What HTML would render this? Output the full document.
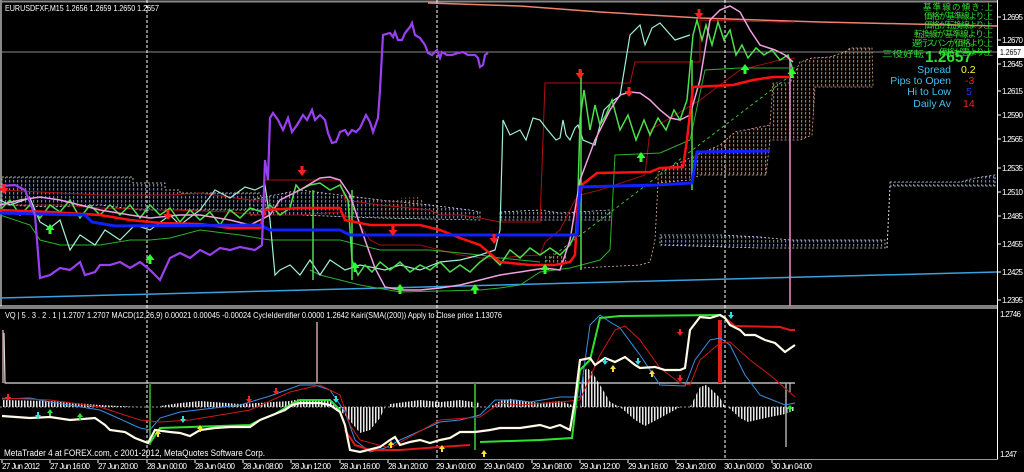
<!DOCTYPE html>
<html><head><meta charset="utf-8"><style>
html,body{margin:0;padding:0;background:#000;width:1024px;height:472px;overflow:hidden}
svg{display:block}
text{font-family:"Liberation Sans","Noto Sans CJK JP",sans-serif}
</style></head><body>
<svg width="1024" height="472" viewBox="0 0 1024 472" xmlns="http://www.w3.org/2000/svg">
<defs>
<pattern id="pv" width="4" height="4" patternUnits="userSpaceOnUse"><rect x="1" y="0" width="1.2" height="2.5" fill="#7474f0"/></pattern>
<pattern id="po" width="4" height="4" patternUnits="userSpaceOnUse"><rect x="1" y="0" width="1.2" height="2.5" fill="#d86040"/></pattern>
<pattern id="ph" width="3" height="3" patternUnits="userSpaceOnUse"><rect x="0" y="0" width="1.5" height="3" fill="#e8e8e8"/></pattern>
<path id="ad" d="M-1.5,-6 h3 v4 h3 l-4.5,6 l-4.5,-6 h3z"/>
<path id="au" d="M-1.5,6 h3 v-4 h3 l-4.5,-6 l-4.5,6 h3z"/>
<path id="sd" d="M-1,-4 h2 v3 h2 l-3,4 l-3,-4 h2z"/>
<path id="su" d="M-1,4 h2 v-3 h2 l-3,-4 l-3,4 h2z"/>
</defs>
<rect width="1024" height="472" fill="#000"/>
<line x1="0" y1="1.5" x2="998" y2="1.5" stroke="#888" stroke-width="2"/>
<line x1="1" y1="0" x2="1" y2="306" stroke="#888" stroke-width="2"/>
<line x1="997.5" y1="0" x2="997.5" y2="460" stroke="#fff"/>
<line x1="0" y1="306" x2="998" y2="306" stroke="#fff"/>
<line x1="0" y1="308" x2="998" y2="308" stroke="#fff"/>
<line x1="0" y1="459.5" x2="998" y2="459.5" stroke="#999"/>
<line x1="0" y1="52" x2="997" y2="52" stroke="#8a8a8a"/>
<g stroke="#fff" stroke-dasharray="3,2">
<line x1="147" y1="0" x2="147" y2="460"/><line x1="437" y1="0" x2="437" y2="460"/><line x1="725" y1="0" x2="725" y2="460"/>
</g>
<polygon points="2,177 133,177 133,183 165,183 165,190 180,190 180,193 260,193 262,200 270,200 270,210 140,210 100,205 50,207 2,205" fill="url(#pv)" stroke="#ddd" stroke-dasharray="2,2" stroke-width="0.8"/>
<polygon points="250,200 300,190 340,195 380,200 430,205 470,210 480,212 480,220 380,218 300,215 250,215" fill="url(#pv)" stroke="#ddd" stroke-dasharray="2,2" stroke-width="0.8"/>
<polygon points="380,200 400,198 420,197 425,205 425,218 380,218" fill="url(#po)"/>
<polygon points="500,212 540,210 560,213 610,210 610,220 500,220" fill="url(#pv)" stroke="#ddd" stroke-dasharray="2,2" stroke-width="0.8"/>
<polygon points="545,255 560,252 565,255 570,262 545,265" fill="url(#po)"/>
<polygon points="658,172 690,158 720,145 735,132 770,125 773,83 790,83 800,62 812,58 830,57 845,52 850,48 872,48 873,87 815,87 812,135 800,140 770,140 766,175 700,175 690,180 658,183" fill="url(#po)" stroke="#e0b090" stroke-dasharray="2,2" stroke-width="0.8"/>
<polygon points="660,235 720,235 760,237 790,240 830,240 885,240 885,248 790,248 760,248 660,245" fill="url(#pv)" stroke="#ddd" stroke-dasharray="2,2" stroke-width="0.8"/>
<polygon points="890,182 960,182 975,178 995,175 995,186 890,186" fill="url(#pv)" stroke="#ddd" stroke-dasharray="2,2" stroke-width="0.8"/>
<polyline points="658,183 655,240 650,262 640,265 580,268" fill="none" stroke="#e0b090" stroke-dasharray="2,2" stroke-width="0.8"/>
<polyline points="890,186 887,248" fill="none" stroke="#ddd" stroke-dasharray="2,2"/>
<line x1="0" y1="298" x2="997" y2="272" stroke="#3aa0e0" stroke-width="1.5"/>
<polyline points="428,3 520,6 600,12 700,18 820,22 997,26" fill="none" stroke="#f08070" stroke-width="1.5"/>
<line x1="790" y1="60" x2="790" y2="306" stroke="#f090d0" stroke-width="1.5"/>
<polyline points="0,190 60,193 100,195 170,195 200,193 250,200 265,200 265,180 340,180 345,200 380,205 430,210 440,215 460,215 480,218 500,222 540,222 545,83 630,83 635,62 700,62 700,20 780,22 795,22" fill="none" stroke="#b01010" stroke-width="1"/>
<polyline points="0,205 60,205 100,208 170,210 230,212 260,215 300,215 340,212 360,225 370,240 380,245 420,245 440,250 460,255 480,258 500,258 520,256 540,255 545,242 560,230 575,200 580,195 600,190 630,180 645,175 650,130 700,100 740,70 780,60 795,58" fill="none" stroke="#a01010" stroke-width="1"/>
<polyline points="0,215 30,225 40,240 60,245 100,245 130,240 150,240 170,238 200,230 240,235 270,240 340,240 380,250 430,250 480,255 500,258 540,262" fill="none" stroke="#2cb02c" stroke-width="1"/>
<polyline points="310,270 320,275 360,285 400,292 480,290 500,288 520,285 540,272 570,268 600,260 610,250 615,155 660,153 690,140 705,70 740,68 780,68 795,68" fill="none" stroke="#2cb02c" stroke-width="1"/>
<line x1="545" y1="262" x2="795" y2="72" stroke="#3cc03c" stroke-width="1" stroke-dasharray="3,3"/>
<polyline points="0,200 10,205 30,198 40,222 50,228 60,220 70,250 80,235 95,245 105,230 120,240 135,225 150,230 170,215 180,225 200,210 215,190 230,198 245,187 255,190 265,185 270,220 275,275 280,270 290,265 300,275 310,260 320,275 330,260 345,270 360,265 385,270 400,265 420,270 440,262 460,260 480,255 495,250 500,230 503,120 510,135 520,130 526,140 533,118 540,120 546,128 556,140 560,138 563,120 566,135 570,140 575,128 578,125 583,140 595,145 600,125 604,110 614,100 620,96 630,35 640,25 645,45 652,28 660,23 675,40 690,35" fill="none" stroke="#9ff0d8" stroke-width="1.2"/>
<g stroke="#4ce04c" stroke-width="1.5" fill="none">
<polyline points="0,210 10,200 20,215 30,205 40,218 50,205 60,212 70,200 80,218 90,205 100,215 110,205 120,215 130,205 140,218 150,205 160,215 170,208 180,222 190,210 200,220 210,212 220,225 230,210 240,218 250,208 262,212 270,205 280,215 290,208 296,185 300,190 310,185 320,183 330,190 340,185 348,200 352,260 358,275 365,265 372,272 380,262 390,270 400,262 410,272 420,265 430,270 440,262 450,272 460,265 470,272 480,262 490,255 500,265 510,250 520,258 530,248 540,255 550,248 560,255 570,245 577,230 580,120 584,90 590,130 595,105 600,125 606,115 612,100 620,130 628,115 636,140 644,120 650,135 658,118 666,130 674,110 680,120 687,100 693,35 697,20 702,40 706,25 712,45 718,22 724,40 730,30 736,55 742,45 748,58 756,48 764,55 772,50 780,60 788,55 793,70"/>
<line x1="581" y1="70" x2="581" y2="270"/><line x1="692" y1="60" x2="692" y2="190"/><line x1="352" y1="190" x2="352" y2="280"/><line x1="313" y1="190" x2="313" y2="280"/>
</g>
<polyline points="0,205 20,200 40,197 60,200 80,205 100,210 130,215 150,218 180,215 200,215 230,220 250,225 270,215 280,200 300,190 320,178 330,177 340,180 350,195 365,240 375,268 385,287 400,290 420,290 440,288 460,285 480,280 500,275 520,272 545,268 560,270 570,240 580,180 595,140 610,110 620,95 630,92 640,93 650,100 660,110 670,118 680,120 690,115 700,80 710,20 720,10 730,6 740,12 750,30 760,45 775,50 785,55 793,62" fill="none" stroke="#f2a0e0" stroke-width="1.5"/>
<polyline points="0,210 50,212 100,215 130,220 160,223 200,224 230,228 260,228 265,210 300,208 340,208 345,220 370,225 420,225 440,230 460,238 480,245 500,262 530,265 555,265 570,262 575,255 578,200 583,184 597,173 650,172 660,168 683,167 687,140 693,87 733,85 753,80 773,77 790,77" fill="none" stroke="#ff1010" stroke-width="2.5"/>
<polyline points="0,213 85,215 92,222 115,226 260,225 270,230 340,230 350,235 380,235 577,235 580,187 657,185 692,183 697,152 770,151" fill="none" stroke="#1020ff" stroke-width="3"/>
<polyline points="2,186 15,185 25,190 35,215 40,278 50,275 60,268 70,270 80,262 85,275 95,272 100,265 110,265 120,262 130,268 140,262 150,270 160,280 170,258 180,253 190,258 200,250 210,255 220,248 230,250 240,247 255,250 262,245 265,160 268,180 270,118 273,113 278,120 283,130 288,118 292,132 297,125 303,115 307,120 312,110 315,120 320,115 325,120 328,133 332,143 336,142 340,132 345,130 348,135 352,130 356,132 360,128 366,115 370,122 373,132 378,118 380,90 383,35 390,33 393,37 395,32 398,40 402,40 405,33 410,27 412,23 415,35 420,38 425,45 428,53 432,55 437,50 440,58 442,52 447,55 452,55 458,53 463,52 468,55 475,55 478,58 480,67 483,65 485,55 488,53" fill="none" stroke="#9a40f0" stroke-width="2.2"/>
<g fill="#ff2020">
<use href="#ad" x="168" y="216"/><use href="#ad" x="393" y="232"/><use href="#ad" x="494" y="240"/><use href="#ad" x="580" y="75"/><use href="#ad" x="629" y="93"/><use href="#ad" x="699" y="15"/><use href="#ad" x="302" y="172"/><use href="#ad" x="4" y="190"/>
</g>
<g fill="#30ff30">
<use href="#au" x="50" y="228"/><use href="#au" x="150" y="258"/><use href="#au" x="355" y="266"/><use href="#au" x="400" y="288"/><use href="#au" x="475" y="288"/><use href="#au" x="545" y="268"/><use href="#au" x="641" y="156"/><use href="#au" x="745" y="68"/><use href="#au" x="792" y="72"/>
</g>
<!-- SUB -->
<polyline points="4,333 5,383 795,383" fill="none" stroke="#ddd" stroke-width="1.2"/>
<line x1="790" y1="383" x2="790" y2="392" stroke="#ddd"/>
<line x1="317" y1="322" x2="317" y2="383" stroke="#d0a0a0" stroke-width="1.5"/>
<line x1="3" y1="330" x2="3" y2="383" stroke="#d0a0a0" stroke-width="1.5"/>
<polygon points="2,400 50,401 100,405 140,407 2,407" fill="url(#ph)"/>
<polygon points="160,406 180,403 200,401 240,404 290,401 300,399 330,400 335,407 160,407" fill="url(#ph)"/>
<polygon points="335,407 345,415 360,433 370,430 380,418 385,407" fill="url(#ph)"/>
<polygon points="390,404 420,400 440,402 460,400 480,403 480,407 390,407" fill="url(#ph)"/>
<polygon points="490,407 500,401 510,399 540,403 560,401 578,407" fill="url(#ph)"/>
<polygon points="580,407 583,372 587,368 592,372 600,385 610,402 620,407" fill="url(#ph)"/>
<polygon points="620,407 635,420 645,426 660,418 680,407" fill="url(#ph)"/>
<polygon points="690,407 700,387 706,385 712,390 720,398 725,407" fill="url(#ph)"/>
<polygon points="728,407 740,418 748,422 765,418 785,414 795,410 795,407" fill="url(#ph)"/>
<line x1="0" y1="407" x2="790" y2="407" stroke="#ccc" stroke-dasharray="2,2" stroke-width="0.8"/>
<line x1="150" y1="383" x2="150" y2="445" stroke="#2c8c2c" stroke-width="2"/>
<line x1="475" y1="383" x2="475" y2="450" stroke="#2c9c2c" stroke-width="2"/>
<line x1="786" y1="383" x2="786" y2="447" stroke="#aaa" stroke-width="1.5"/>
<rect x="718" y="320" width="4" height="63" fill="#e02020"/>
<polyline points="2,399 30,398 50,402 100,410 140,428 150,430 160,418 180,412 240,405 270,396 300,385 315,385 330,390 345,412 355,440 370,452 385,448 400,440 440,422 460,420 480,415 485,410 495,400 515,400 530,402 560,397 580,397 590,325 600,315 610,322 620,328 640,355 660,385 685,386 695,360 710,340 720,338 730,345 745,375 760,395 785,405 795,403" fill="none" stroke="#3a8ee0" stroke-width="1"/>
<polyline points="2,398 50,400 100,407 140,420 160,422 190,420 250,410 290,392 320,385 340,395 350,425 360,440 390,448 440,420 480,417 500,403 520,405 560,402 580,400 600,355 615,330 625,326 640,340 660,368 680,383 690,385 700,360 720,343 730,342 750,360 770,375 795,397" fill="none" stroke="#d01818" stroke-width="1"/>
<polyline points="725,318 735,326 780,327 790,330 795,330" fill="none" stroke="#e01818" stroke-width="2"/>
<polyline points="345,430 355,445 370,450 400,450 440,447 470,445" fill="none" stroke="#e01818" stroke-width="2"/>
<polyline points="150,443 160,428 250,425 260,420 275,414 290,405 300,400 330,400 340,410" fill="none" stroke="#30e030" stroke-width="2"/>
<polyline points="480,442 540,440 572,438 580,370 590,360 600,318 620,316 720,315" fill="none" stroke="#30e030" stroke-width="2"/>
<polyline points="2,416 30,418 50,417 70,420 95,418 105,425 110,430 125,432 135,438 148,443 155,430 170,432 180,433 190,436 200,430 215,428 230,427 250,427 260,420 275,414 285,410 292,405 300,403 320,403 330,405 340,412 345,425 350,450 360,452 380,447 390,440 395,437 400,445 410,442 420,440 430,443 440,440 450,438 460,432 475,432 490,430 500,428 520,428 540,425 550,428 560,425 570,430 575,400 580,360 590,358 595,365 605,358 615,362 625,357 635,365 640,368 655,367 665,370 680,370 685,368 690,330 700,317 710,318 720,315 725,318 730,325 740,330 745,335 755,335 765,340 775,343 785,352 795,345" fill="none" stroke="#fffbe6" stroke-width="2.2"/>
<g fill="#ff2020"><use href="#sd" x="8" y="398"/><use href="#sd" x="249" y="400"/><use href="#sd" x="276" y="392"/><use href="#sd" x="680" y="333"/><use href="#sd" x="680" y="379"/></g>
<g fill="#30e0e0"><use href="#sd" x="38" y="416"/><use href="#sd" x="183" y="420"/><use href="#sd" x="336" y="400"/><use href="#sd" x="605" y="362"/><use href="#sd" x="638" y="362"/><use href="#sd" x="731" y="316"/></g>
<g fill="#30e030"><use href="#su" x="50" y="412"/><use href="#su" x="80" y="416"/><use href="#su" x="790" y="408"/></g>
<g fill="#ffe030"><use href="#su" x="158" y="433"/><use href="#su" x="200" y="428"/><use href="#su" x="391" y="444"/><use href="#su" x="442" y="448"/><use href="#su" x="484" y="453"/><use href="#su" x="613" y="368"/><use href="#su" x="652" y="373"/></g>
<!-- texts -->
<text x="5" y="11" fill="#fff" font-size="8.5" textLength="154" lengthAdjust="spacingAndGlyphs">EURUSDFXF,M15  1.2656 1.2659 1.2650 1.2657</text>
<text x="5" y="318" fill="#fff" font-size="8" textLength="497" lengthAdjust="spacingAndGlyphs">VQ | 5 . 3 . 2 . 1 | 1.2707 1.2707  MACD(12,26,9) 0.00021 0.00045 -0.00024  CycleIdentifier 0.0000 1.2642  Kairi(SMA((200)) Apply to Close price 1.13076</text>
<text x="4" y="456" fill="#fff" font-size="9" textLength="261" lengthAdjust="spacingAndGlyphs">MetaTrader 4 at FOREX.com, c 2001-2012, MetaQuotes Software Corp.</text>
<g fill="#30e030" font-size="8.5" lengthAdjust="spacingAndGlyphs">
<text x="923" y="10" textLength="70">基準線の傾き:上</text>
<text x="924" y="19" textLength="69">価格が基準線より:上</text>
<text x="924" y="28" textLength="69">価格が転換線より:上</text>
<text x="914" y="37" textLength="79">転換線が基準線より:上</text>
<text x="912" y="46" textLength="81">遅行スパンが価格より:上</text>
<text x="939" y="55" textLength="54">価格が雲より:上</text>
</g>
<text x="882" y="57" fill="#30e030" font-size="8.5" textLength="42" lengthAdjust="spacingAndGlyphs">三役好転</text>
<text x="925" y="62" fill="#30e030" font-size="16" font-weight="bold" textLength="47" lengthAdjust="spacingAndGlyphs">1.2657</text>
<line x1="973" y1="52" x2="990" y2="52" stroke="#30e030" stroke-width="2"/>
<g font-size="10.5" text-anchor="end" fill="#40c0f0">
<text x="951" y="73">Spread</text><text x="951" y="84">Pips to Open</text><text x="951" y="95">Hi to Low</text><text x="951" y="107">Daily Av</text>
</g>
<g font-size="10.5">
<text x="961" y="73" fill="#ffff30">0.2</text><text x="965" y="84" fill="#ff2020">-3</text><text x="966" y="95" fill="#2030ff">5</text><text x="963" y="107" fill="#ff2020">14</text>
</g>
<g fill="#fff" font-size="8" lengthAdjust="spacingAndGlyphs">
<text x="1002" y="20" textLength="21">1.2695</text><text x="1002" y="43" textLength="21">1.2670</text><text x="1002" y="67" textLength="21">1.2645</text><text x="1002" y="94" textLength="21">1.2615</text><text x="1002" y="118" textLength="21">1.2590</text><text x="1002" y="142" textLength="21">1.2565</text><text x="1002" y="171" textLength="21">1.2535</text><text x="1002" y="195" textLength="21">1.2510</text><text x="1002" y="219" textLength="21">1.2485</text><text x="1002" y="247" textLength="21">1.2455</text><text x="1002" y="275" textLength="21">1.2425</text><text x="1002" y="303" textLength="21">1.2395</text>
<text x="1000" y="317" textLength="21">1.2746</text><text x="1000" y="457" textLength="17">1.247</text>
</g>
<g stroke="#fff"><line x1="998" y1="17" x2="1001" y2="17"/><line x1="998" y1="40" x2="1001" y2="40"/><line x1="998" y1="64" x2="1001" y2="64"/><line x1="998" y1="91" x2="1001" y2="91"/><line x1="998" y1="115" x2="1001" y2="115"/><line x1="998" y1="139" x2="1001" y2="139"/><line x1="998" y1="168" x2="1001" y2="168"/><line x1="998" y1="192" x2="1001" y2="192"/><line x1="998" y1="216" x2="1001" y2="216"/><line x1="998" y1="244" x2="1001" y2="244"/><line x1="998" y1="272" x2="1001" y2="272"/><line x1="998" y1="300" x2="1001" y2="300"/></g>
<rect x="998" y="46" width="26" height="12" fill="#fff"/>
<text x="1000" y="55" fill="#000" font-size="8" textLength="21" lengthAdjust="spacingAndGlyphs">1.2657</text>
<g fill="#fff" font-size="8" lengthAdjust="spacingAndGlyphs">
<text x="2" y="469" textLength="38">27 Jun 2012</text><text x="50" y="469" textLength="40">27 Jun 16:00</text><text x="98" y="469" textLength="40">27 Jun 20:00</text><text x="147" y="469" textLength="40">28 Jun 00:00</text><text x="195" y="469" textLength="40">28 Jun 04:00</text><text x="243" y="469" textLength="40">28 Jun 08:00</text><text x="291" y="469" textLength="40">28 Jun 12:00</text><text x="340" y="469" textLength="40">28 Jun 16:00</text><text x="388" y="469" textLength="40">28 Jun 20:00</text><text x="436" y="469" textLength="40">29 Jun 00:00</text><text x="484" y="469" textLength="40">29 Jun 04:00</text><text x="532" y="469" textLength="40">29 Jun 08:00</text><text x="580" y="469" textLength="40">29 Jun 12:00</text><text x="628" y="469" textLength="40">29 Jun 16:00</text><text x="676" y="469" textLength="40">29 Jun 20:00</text><text x="724" y="469" textLength="40">30 Jun 00:00</text><text x="772" y="469" textLength="40">30 Jun 04:00</text>
</g>
<g stroke="#fff"><line x1="2" y1="460" x2="2" y2="463"/><line x1="50" y1="460" x2="50" y2="463"/><line x1="98" y1="460" x2="98" y2="463"/><line x1="147" y1="460" x2="147" y2="463"/><line x1="195" y1="460" x2="195" y2="463"/><line x1="243" y1="460" x2="243" y2="463"/><line x1="291" y1="460" x2="291" y2="463"/><line x1="340" y1="460" x2="340" y2="463"/><line x1="388" y1="460" x2="388" y2="463"/><line x1="532" y1="460" x2="532" y2="463"/><line x1="580" y1="460" x2="580" y2="463"/><line x1="628" y1="460" x2="628" y2="463"/><line x1="676" y1="460" x2="676" y2="463"/><line x1="772" y1="460" x2="772" y2="463"/></g>
</svg>
</body></html>
